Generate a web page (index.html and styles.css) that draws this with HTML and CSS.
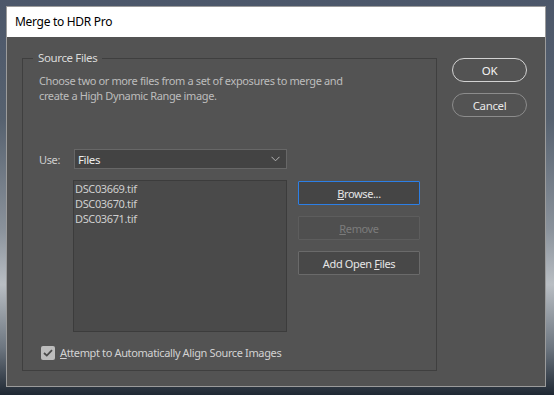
FILE: index.html
```html
<!DOCTYPE html>
<html lang="en">
<head>
    <meta charset="UTF-8">
    <title>Merge to HDR Pro</title>
    <link rel="stylesheet" href="styles.css">
</head>
<body>
    <div class="window">
        <div class="titlebar">Merge to HDR Pro</div>
        <div class="content">
            <fieldset class="group">
                <legend>Source Files</legend>
                <p class="desc">Choose two or more files from a set of exposures to merge and<br>create a High Dynamic Range image.</p>

                <div class="use-row">
                    <label class="use-label">Use:</label>
                    <div class="dropdown">
                        <span>Files</span>
                        <svg class="chevron" width="9" height="6" viewBox="0 0 9 6">
                            <polyline points="0.5,0.8 4.5,4.8 8.5,0.8" fill="none" stroke="#b5b5b5" stroke-width="1"/>
                        </svg>
                    </div>
                </div>

                <div class="files-row">
                    <div class="file-list">
                        <div class="file-item">DSC03669.tif</div>
                        <div class="file-item">DSC03670.tif</div>
                        <div class="file-item">DSC03671.tif</div>
                    </div>
                    <div class="file-buttons">
                        <div class="btn btn-focus"><span><u>B</u>rowse...</span></div>
                        <div class="btn btn-disabled"><span><u>R</u>emove</span></div>
                        <div class="btn"><span>Add Open <u>F</u>iles</span></div>
                    </div>
                </div>

                <div class="align-row">
                    <span class="checkbox">
                        <svg width="10" height="8" viewBox="0 0 10 8">
                            <polyline points="1,4 3.8,6.6 9,1.2" fill="none" stroke="#4a4a4a" stroke-width="1.8"/>
                        </svg>
                    </span>
                    <span class="align-label"><u>A</u>ttempt to Automatically Align Source Images</span>
                </div>
            </fieldset>

            <div class="side">
                <div class="pill pill-default">OK</div>
                <div class="pill">Cancel</div>
            </div>
        </div>
    </div>
</body>
</html>
```

FILE: styles.css
```css
* { margin: 0; padding: 0; box-sizing: border-box; }
body {
    width: 554px;
    height: 395px;
    padding: 6px 8px 8px 6px;
    overflow: hidden;
    font-family: "Noto Sans", "Liberation Sans", sans-serif;
    font-size: 11px;
    letter-spacing: -0.37px;
    background: linear-gradient(180deg, #4c576a 0%, #56616f 30%, #8a929b 58%, #b9bec3 72%, #6d7680 88%, #1f2833 100%);
}
.window {
    width: 540px;
    height: 381px;
    border: 1px solid #9b9b9b;
    background: #535353;
    display: flex;
    flex-direction: column;
}
.titlebar {
    height: 30px;
    background: #ffffff;
    color: #000000;
    font-size: 12px;
    letter-spacing: -0.3px;
    line-height: 30px;
    padding-left: 8px;
}
.content {
    display: flex;
    align-items: flex-start;
    padding: 14px 0 0 15px;
}
.group {
    width: 415px;
    height: 320px;
    border: 1px solid #3f3f3f;
    padding: 0 0 0 16px;
    color: #d4d4d4;
}
.group legend {
    margin-left: -6px;
    padding: 0 5px;
    font-size: 11.5px;
    line-height: 14px;
    color: #dadada;
}
.desc {
    margin-top: 8px;
    line-height: 15px;
    color: #bdbdbd;
}
.use-row {
    display: flex;
    align-items: center;
    margin-top: 46px;
}
.use-label {
    width: 35px;
    color: #cfcfcf;
}
.dropdown {
    width: 213px;
    height: 20px;
    background: #434343;
    border: 1px solid #676767;
    display: flex;
    align-items: center;
    justify-content: space-between;
    padding: 0 6px 0 3px;
    color: #ececec;
    font-size: 11.5px;
}
.files-row {
    display: flex;
    align-items: flex-start;
    margin-top: 11px;
    margin-left: 34px;
}
.file-list {
    width: 214px;
    height: 152px;
    background: #4a4a4a;
    border: 1px solid #3c3c3c;
    padding: 0 1px;
    line-height: 15px;
    color: #cfcfcf;
}
.file-buttons {
    display: flex;
    flex-direction: column;
    gap: 11px;
    margin-left: 11px;
    margin-top: 1px;
}
.btn {
    width: 122px;
    height: 24px;
    border: 1px solid #6a6a6a;
    border-radius: 1px;
    background: #484848;
    color: #e6e6e6;
    display: flex;
    align-items: center;
    justify-content: center;
}
.btn-focus {
    border-color: #2c7fe6;
    background: #454545;
}
.btn-disabled {
    border-color: #5d5d5d;
    background: #4f4f4f;
    color: #7c7c7c;
}
.align-row {
    display: flex;
    align-items: center;
    margin-top: 13px;
    margin-left: 2px;
}
.checkbox {
    width: 14px;
    height: 14px;
    border-radius: 2px;
    background: #bdbdbd;
    display: flex;
    align-items: center;
    justify-content: center;
}
.align-label {
    margin-left: 5px;
    color: #d2d2d2;
}
.side {
    display: flex;
    flex-direction: column;
    gap: 11px;
    margin: 7px 0 0 15px;
}
.pill {
    width: 75px;
    height: 24px;
    border: 1px solid #8c8c8c;
    border-radius: 12px;
    display: flex;
    align-items: center;
    justify-content: center;
    color: #e8e8e8;
    font-size: 11.5px;
}
.pill-default {
    border-color: #d2d2d2;
    color: #f4f4f4;
}
```
